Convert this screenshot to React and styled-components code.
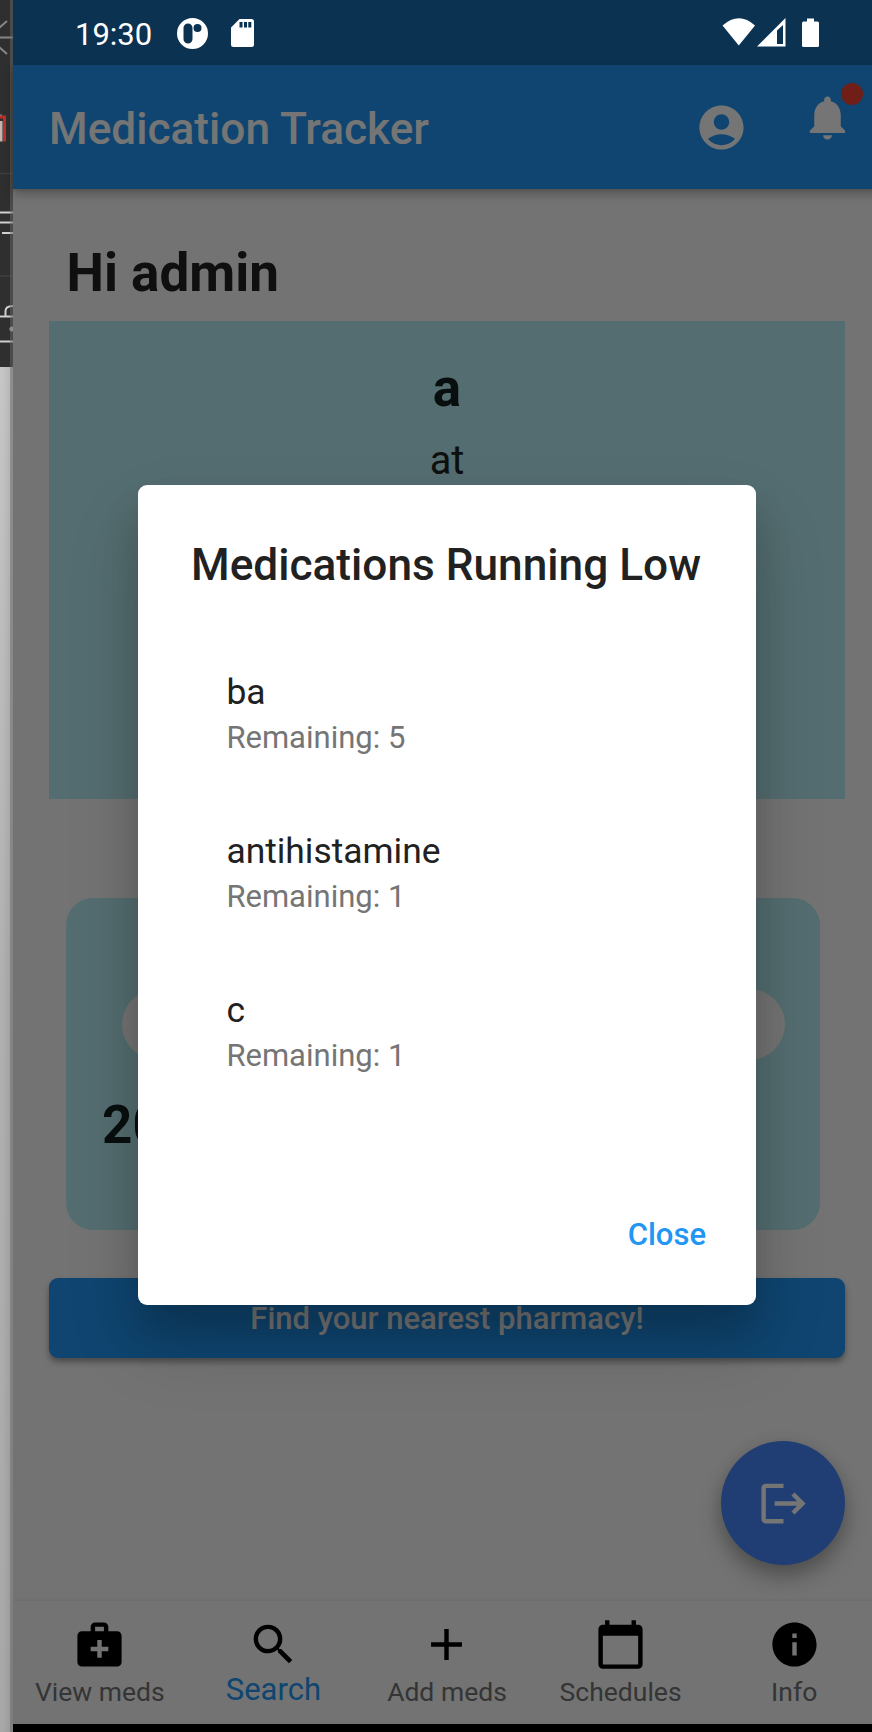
import React from "react";
import styled, { createGlobalStyle } from "styled-components";

const Global = createGlobalStyle`
  * { box-sizing: border-box; }
  html, body { margin: 0; padding: 0; }
  body { font-family: Roboto, "Liberation Sans", sans-serif; overflow: hidden; background: #737373; }
`;

const Screen = styled.div`
  display: flex;
  width: 872px;
  height: 1732px;
  overflow: hidden;
`;

const Edge = styled.div`
  flex: none;
  width: 13px;
  height: 1732px;
  display: flex;
  flex-direction: column;
  position: relative;
`;
const EdgeTools = styled.div`
  height: 367px;
  background: #2f2f2f;
  svg { display: block; }
`;
const EdgePage = styled.div`
  flex: 1;
  background:
    linear-gradient(90deg, rgba(0, 0, 0, 0) 20%, rgba(0, 0, 0, 0.1)),
    linear-gradient(180deg, #c6c6c6, #b0b0b0 45%, #a8a8a8);
`;
const EdgeBorder = styled.div`
  position: absolute;
  right: 0;
  top: 0;
  width: 3px;
  height: 100%;
  background: rgba(104, 104, 104, 0.5);
`;

const Phone = styled.div`
  position: relative;
  flex: none;
  width: 868px;
  height: 1732px;
  display: flex;
  flex-direction: column;
  background: #fafafa;
`;

const StatusSpace = styled.div`
  flex: none;
  height: 65px;
  background: #196eb0;
`;

const AppBar = styled.header`
  flex: none;
  position: relative;
  height: 124px;
  display: flex;
  align-items: center;
  padding: 0 27px 0 36px;
  background: #2196f3;
  color: #fff;
  box-shadow: 0 5px 10px rgba(0, 0, 0, 0.26), 0 1px 3px rgba(0, 0, 0, 0.12);
`;
const AppTitle = styled.h1`
  flex: 1;
  margin: 0;
  padding-top: 3px;
  font-size: 44.2px;
  line-height: 52px;
  font-weight: 500;
`;
const Glyph = styled.svg`
  display: block;
  flex: none;
  width: 53px;
  height: 53px;
  fill: currentColor;
`;
const BellButton = styled.div`
  position: relative;
  margin: -19px 0 0 53px;
`;
const Dot = styled.span`
  position: absolute;
  left: 40px;
  top: -8px;
  width: 22px;
  height: 22px;
  border-radius: 50%;
  background: #f44336;
`;

const Body = styled.main`
  flex: 1;
  display: flex;
  flex-direction: column;
  padding: 0 36px;
`;
const Greeting = styled.h2`
  margin: 52px 0 0 17.5px;
  height: 80px;
  font-size: 53px;
  line-height: 64px;
  font-weight: 700;
  color: #222;
`;
const NextDose = styled.section`
  height: 478px;
  padding-top: 35px;
  background: #b7edf3;
  text-align: center;
`;
const DoseName = styled.div`
  font-size: 53px;
  line-height: 64px;
  font-weight: 700;
  color: #15201f;
`;
const DoseText = styled.div`
  margin-top: 14px;
  font-size: 39.8px;
  line-height: 54px;
  color: #202324;
`;
const ProgressCard = styled.section`
  margin: 99px 25px 0 17px;
  height: 332px;
  padding: 91px 35px 0;
  border-radius: 27px;
  background: #b7edf3;
`;
const Pill = styled.div`
  height: 71px;
  margin: 0 0.5px 0 20.5px;
  border-radius: 36px;
  background: #fafafa;
`;
const Percent = styled.div`
  margin: 33px 0 0 1px;
  font-size: 53px;
  line-height: 64px;
  font-weight: 700;
  color: #15201f;
`;
const PharmacyButton = styled.button`
  margin-top: 48px;
  height: 80px;
  padding: 2px 0 0;
  border: 0;
  border-radius: 9px;
  background: #2196f3;
  color: #fff;
  font: 500 31px/36px Roboto, sans-serif;
  box-shadow: 0 4px 6px rgba(0, 0, 0, 0.36);
`;
const Fab = styled.button`
  align-self: flex-end;
  margin-top: 83px;
  width: 124px;
  height: 124px;
  display: grid;
  place-items: center;
  padding: 0;
  border: 0;
  border-radius: 50%;
  background: #4687fa;
  color: #fff;
  box-shadow: 0 13px 22px rgba(0, 0, 0, 0.26), 0 3px 18px rgba(0, 0, 0, 0.12);
`;

const BottomNav = styled.nav`
  flex: none;
  height: 123px;
  display: flex;
  background: #fafafa;
  box-shadow: 0 -1px 3px rgba(0, 0, 0, 0.08);
`;
const NavItem = styled.div`
  flex: 1;
  display: flex;
  flex-direction: column;
  align-items: center;
  padding-top: 17px;
  color: #000;
`;
const NavLabel = styled.span`
  margin-top: ${(p) => (p.$active ? "1px" : "3px")};
  font-size: ${(p) => (p.$active ? "31px" : "26.5px")};
  line-height: 35px;
  color: ${(p) => (p.$active ? "#2196f3" : "#737373")};
`;
const SystemBar = styled.div`
  flex: none;
  height: 8px;
  background: #000;
`;

const Scrim = styled.div`
  position: absolute;
  inset: 0;
  background: rgba(0, 0, 0, 0.54);
`;
const StatusBar = styled.div`
  position: absolute;
  inset: 0 0 auto 0;
  height: 65px;
  color: #fff;
  display: flex;
  align-items: center;
  padding: 3px 57.5px 0 62px;
  font-size: 31px;
  svg { display: block; flex: none; fill: #fff; margin-top: -2px; }
`;
const Time = styled.span`
  flex: none;
  width: 102px;
`;
const Spacer = styled.span`
  flex: ${(p) => (p.$width ? `0 0 ${p.$width}px` : "1")};
`;

const Dialog = styled.div`
  position: absolute;
  left: 125px;
  top: 485px;
  width: 618px;
  height: 820px;
  display: flex;
  flex-direction: column;
  padding: 53px 35px 0 53px;
  border-radius: 9px;
  background: #fff;
  color: #212121;
  box-shadow: 0 26px 36px rgba(0, 0, 0, 0.16), 0 38px 76px rgba(0, 0, 0, 0.14);
`;
const DialogTitle = styled.h3`
  margin: 0 0 74px;
  font-size: 44.2px;
  line-height: 54px;
  font-weight: 500;
  white-space: nowrap;
`;
const Item = styled.div`
  height: 159.2px;
  padding: 0 0 0 35.4px;
`;
const ItemName = styled.div`
  padding-top: 3px;
  font-size: 35.4px;
  line-height: 46px;
`;
const ItemNote = styled.div`
  margin-top: 1px;
  font-size: 31px;
  line-height: 44px;
  color: #757575;
`;
const CloseButton = styled.button`
  align-self: flex-end;
  margin-top: 71px;
  padding: 0 15px;
  border: 0;
  background: none;
  color: #2196f3;
  font: 500 31px/40px Roboto, sans-serif;
`;

const paths = {
  account:
    "M12 2C6.48 2 2 6.48 2 12s4.48 10 10 10 10-4.48 10-10S17.52 2 12 2zm0 4c1.93 0 3.5 1.57 3.5 3.5S13.93 13 12 13s-3.5-1.57-3.5-3.5S10.07 6 12 6zm0 14c-2.03 0-4.43-.82-6.14-2.88C7.55 15.8 9.68 15 12 15s4.45.8 6.14 2.12C16.43 19.18 14.03 20 12 20z",
  bell: "M12 22c1.1 0 2-.9 2-2h-4c0 1.1.89 2 2 2zm6-6v-5c0-3.07-1.64-5.64-4.5-6.32V4c0-.83-.67-1.5-1.5-1.5s-1.5.67-1.5 1.5v.68C7.63 5.36 6 7.92 6 11v5l-2 2v1h16v-1l-2-2z",
  logout:
    "M17 7l-1.41 1.41L18.17 11H8v2h10.17l-2.58 2.58L17 17l5-5zM4 5h8V3H4c-1.1 0-2 .9-2 2v14c0 1.1.9 2 2 2h8v-2H4V5z",
  bag: "M20 6h-4V4c0-1.1-.9-2-2-2h-4c-1.1 0-2 .9-2 2v2H4c-1.1 0-2 .9-2 2v12c0 1.1.9 2 2 2h16c1.1 0 2-.9 2-2V8c0-1.1-.9-2-2-2zM10 4h4v2h-4V4zm6 11h-3v3h-2v-3H8v-2h3v-3h2v3h3v2z",
  search:
    "M15.5 14h-.79l-.28-.27A6.471 6.471 0 0 0 16 9.5 6.5 6.5 0 1 0 9.5 16c1.61 0 3.09-.59 4.23-1.57l.27.28v.79l5 4.99L20.49 19l-4.99-5zm-6 0C7.01 14 5 11.99 5 9.5S7.01 5 9.5 5 14 7.01 14 9.5 11.99 14 9.5 14z",
  add: "M19 13h-6v6h-2v-6H5v-2h6V5h2v6h6v2z",
  calendar:
    "M20 3h-1V1h-2v2H7V1H5v2H4c-1.1 0-2 .9-2 2v16c0 1.1.9 2 2 2h16c1.1 0 2-.9 2-2V5c0-1.1-.9-2-2-2zm0 18H4V8h16v13z",
  info: "M12 2C6.48 2 2 6.48 2 12s4.48 10 10 10 10-4.48 10-10S17.52 2 12 2zm1 15h-2v-6h2v6zm0-8h-2V7h2v2z",
};

const Icon = ({ name }) => (
  <Glyph viewBox="0 0 24 24">
    <path d={paths[name]} />
  </Glyph>
);

const navItems = [
  { icon: "bag", label: "View meds" },
  { icon: "search", label: "Search", active: true },
  { icon: "add", label: "Add meds" },
  { icon: "calendar", label: "Schedules" },
  { icon: "info", label: "Info" },
];

const lowMeds = [
  { name: "ba", remaining: 5 },
  { name: "antihistamine", remaining: 1 },
  { name: "c", remaining: 1 },
];

export default function App() {
  return (
    <Screen>
      <Global />
      <Edge>
        <EdgeTools>
          <svg width="13" height="367" viewBox="0 0 13 367" fill="none">
            <path d="M-6 37.5H13M-1 28L7 21M-1 47L7 54" stroke="#858585" strokeWidth="2" />
            <path d="M0 114.500H2V117H0Z" fill="#8a8a8a" />
            <path d="M0 117H4.500V141.500" stroke="#b8302c" strokeWidth="3" />
            <path d="M0 121H2.500V141.500H0Z" fill="#c9b3b3" />
            <path d="M0 173.500H13M0 276H13" stroke="#3f3f3f" strokeWidth="1.5" />
            <path d="M0 212.500H13M0 222.500H13M2 233H13" stroke="#d0d0d0" strokeWidth="2" />
            <path d="M0 316.500H13M0 341.500H13M5.500 316V311Q5.500 306 13 306" stroke="#d0d0d0" strokeWidth="2" />
            <circle cx="12" cy="329" r="2.500" fill="#b0b0b0" />
          </svg>
        </EdgeTools>
        <EdgePage />
        <EdgeBorder />
      </Edge>
      <Phone>
        <StatusSpace />
        <AppBar>
          <AppTitle>Medication Tracker</AppTitle>
          <Icon name="account" />
          <BellButton>
            <Icon name="bell" />
            <Dot />
          </BellButton>
        </AppBar>
        <Body>
          <Greeting>Hi admin</Greeting>
          <NextDose>
            <DoseName>a</DoseName>
            <DoseText>at</DoseText>
          </NextDose>
          <ProgressCard>
            <Pill />
            <Percent>20</Percent>
          </ProgressCard>
          <PharmacyButton>Find your nearest pharmacy!</PharmacyButton>
          <Fab>
            <Icon name="logout" />
          </Fab>
        </Body>
        <BottomNav>
          {navItems.map((n) => (
            <NavItem key={n.label}>
              <Icon name={n.icon} />
              <NavLabel $active={n.active}>{n.label}</NavLabel>
            </NavItem>
          ))}
        </BottomNav>
        <SystemBar />
        <Scrim />
        <StatusBar>
          <Time>19:30</Time>
          <svg width="31" height="31" viewBox="0 0 31 31">
            <path
              fillRule="evenodd"
              d="M15.500 0a15.500 15.500 0 1 1 0 31a15.500 15.500 0 1 1 0-31zM11 5.500a4.500 4.500 0 0 0-4.500 4.500v11a4.500 4.500 0 0 0 9 0V10a4.500 4.500 0 0 0-4.500-4.500zM20.500 6a4 4 0 1 0 0 8a4 4 0 1 0 0-8z"
            />
          </svg>
          <Spacer $width={22.5} />
          <svg width="23" height="28" viewBox="0 0 23 28">
            <path
              fillRule="evenodd"
              d="M8.500 0H20.500Q23 0 23 2.500V25.500Q23 28 20.500 28H2.500Q0 28 0 25.500V8.500zM8.500 3v5.500h3V3zM13 3v5.500h3V3zM17.300 3v5.500h3V3z"
            />
          </svg>
          <Spacer />
          <svg width="102" height="30" viewBox="0 0 102 30">
            <path d="M0.500 7.500Q17 -7 33 7.500L16.800 27.500z" />
            <path fillRule="evenodd" d="M35 28.500L63.500 0V28.500zM55 12.500V26H61V7z" />
            <path d="M85 0.500H92V3.500H95.500Q97 3.500 97 5V27.500Q97 29 95.500 29H81.500Q80 29 80 27.500V5Q80 3.500 81.500 3.500H85z" />
          </svg>
        </StatusBar>
        <Dialog>
          <DialogTitle>Medications Running Low</DialogTitle>
          {lowMeds.map((m) => (
            <Item key={m.name}>
              <ItemName>{m.name}</ItemName>
              <ItemNote>Remaining: {m.remaining}</ItemNote>
            </Item>
          ))}
          <CloseButton>Close</CloseButton>
        </Dialog>
      </Phone>
    </Screen>
  );
}
